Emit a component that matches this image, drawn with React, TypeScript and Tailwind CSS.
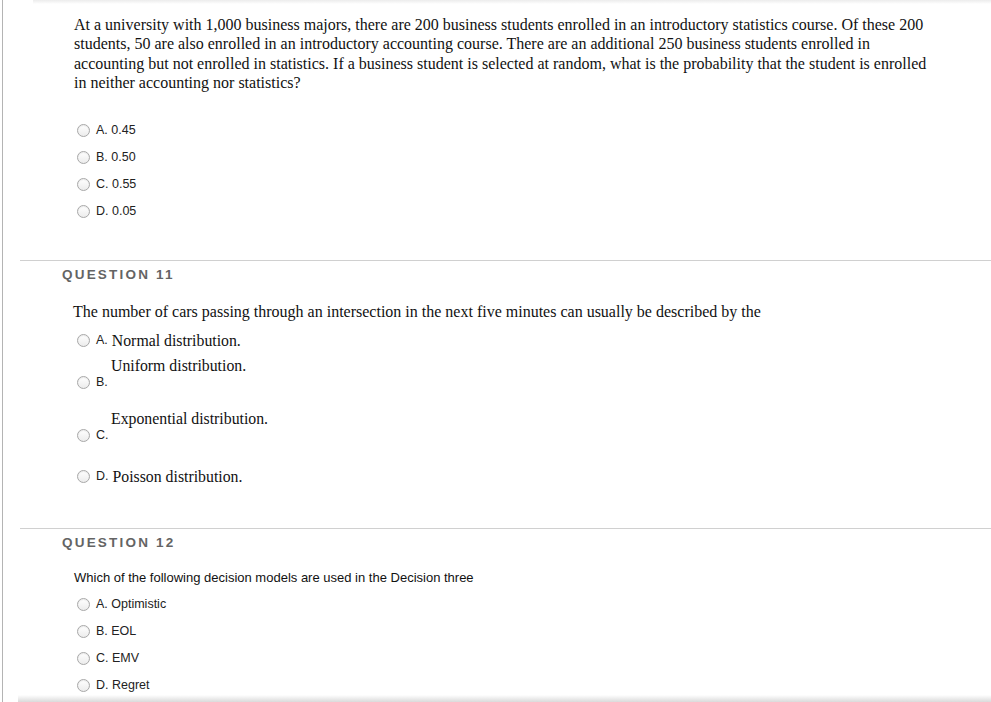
import React from 'react';

const serif = "font-['Liberation_Serif','Times_New_Roman',serif]";
const sans = "font-['Liberation_Sans',Arial,sans-serif]";

function Radio() {
  return (
    <span className="inline-block w-[13px] h-[13px] shrink-0 rounded-full border border-[#a8a8a8] bg-gradient-to-b from-white to-[#ececec] shadow-[inset_0_1px_1px_rgba(0,0,0,0.08)]" />
  );
}

// simple option row: radio + sans label (+ optional serif text inline)
function Option({ letter, text, serifText }: { letter: string; text?: string; serifText?: string }) {
  return (
    <div className="h-[27px] flex items-center pl-[74px]">
      <Radio />
      <span className={`ml-[6px] text-[12.5px] text-[#222] ${sans}`}>
        {letter}
        {text ? ` ${text}` : ''}
      </span>
      {serifText && <span className={`ml-[4px] text-[15.8px] text-[#111] ${serif}`}>{serifText}</span>}
    </div>
  );
}

// option where the answer text sits on a line above the letter
function StackedOption({ letter, text }: { letter: string; text: string }) {
  return (
    <div className="flex flex-col">
      <div className={`pl-[108px] h-[16px] leading-[16px] text-[15.8px] text-[#111] ${serif}`}>{text}</div>
      <div className="h-[16px] flex items-center pl-[74px]">
        <Radio />
        <span className={`ml-[6px] text-[12.5px] text-[#222] ${sans}`}>{letter}</span>
      </div>
    </div>
  );
}

function Divider() {
  return <div className="ml-[17px] h-px bg-[#d0d0d0]" />;
}

function Heading({ n }: { n: number }) {
  return (
    <div className={`pl-[59px] h-[16px] leading-[16px] text-[13.5px] font-bold tracking-[2.2px] text-[#646464] ${sans}`}>
      QUESTION {n}
    </div>
  );
}

export default function App() {
  return (
    <div className="relative w-[989px] h-[702px] overflow-hidden bg-white border-l border-[#b4b4b4] ml-[2px]">
      {/* faint shadows at the top and bottom edges of the frame */}
      <div className="absolute top-0 left-[30px] right-0 h-[4px] bg-gradient-to-b from-[#ececec] to-white" />
      <div className="absolute bottom-0 left-[15px] right-0 h-[7px] bg-gradient-to-b from-white to-[#dadada]" />

      {/* Question 10 */}
      <div className={`pt-[15px] pl-[71px] pr-[50px] text-[16px] leading-[19.4px] text-[#111] ${serif}`}>
        At a university with 1,000 business majors, there are 200 business students enrolled in an introductory statistics course. Of these 200
        <br />
        students, 50 are also enrolled in an introductory accounting course. There are an additional 250 business students enrolled in
        <br />
        accounting but not enrolled in statistics. If a business student is selected at random, what is the probability that the student is enrolled
        <br />
        in neither accounting nor statistics?
      </div>
      <div className="mt-[24px]">
        <Option letter="A." text="0.45" />
        <Option letter="B." text="0.50" />
        <Option letter="C." text="0.55" />
        <Option letter="D." text="0.05" />
      </div>

      <div className="mt-[35px]">
        <Divider />
      </div>

      {/* Question 11 */}
      <div className="mt-[6px]">
        <Heading n={11} />
      </div>
      <div className={`mt-[19px] pl-[70px] text-[16px] leading-[19.4px] text-[#111] ${serif}`}>
        The number of cars passing through an intersection in the next five minutes can usually be described by the
      </div>
      <div className="mt-[6px]">
        <Option letter="A." serifText="Normal distribution." />
        <div className="mt-[4px]">
          <StackedOption letter="B." text="Uniform distribution." />
        </div>
        <div className="mt-[21px]">
          <StackedOption letter="C." text="Exponential distribution." />
        </div>
        <div className="mt-[20px]">
          <Option letter="D." serifText="Poisson distribution." />
        </div>
      </div>

      <div className="mt-[38px]">
        <Divider />
      </div>

      {/* Question 12 */}
      <div className="mt-[6px]">
        <Heading n={12} />
      </div>
      <div className={`mt-[19px] pl-[71px] h-[16px] leading-[16px] text-[13px] text-[#111] ${sans}`}>
        Which of the following decision models are used in the Decision three
      </div>
      <div className="mt-[5px]">
        <Option letter="A." text="Optimistic" />
        <Option letter="B." text="EOL" />
        <Option letter="C." text="EMV" />
        <Option letter="D." text="Regret" />
      </div>
    </div>
  );
}
